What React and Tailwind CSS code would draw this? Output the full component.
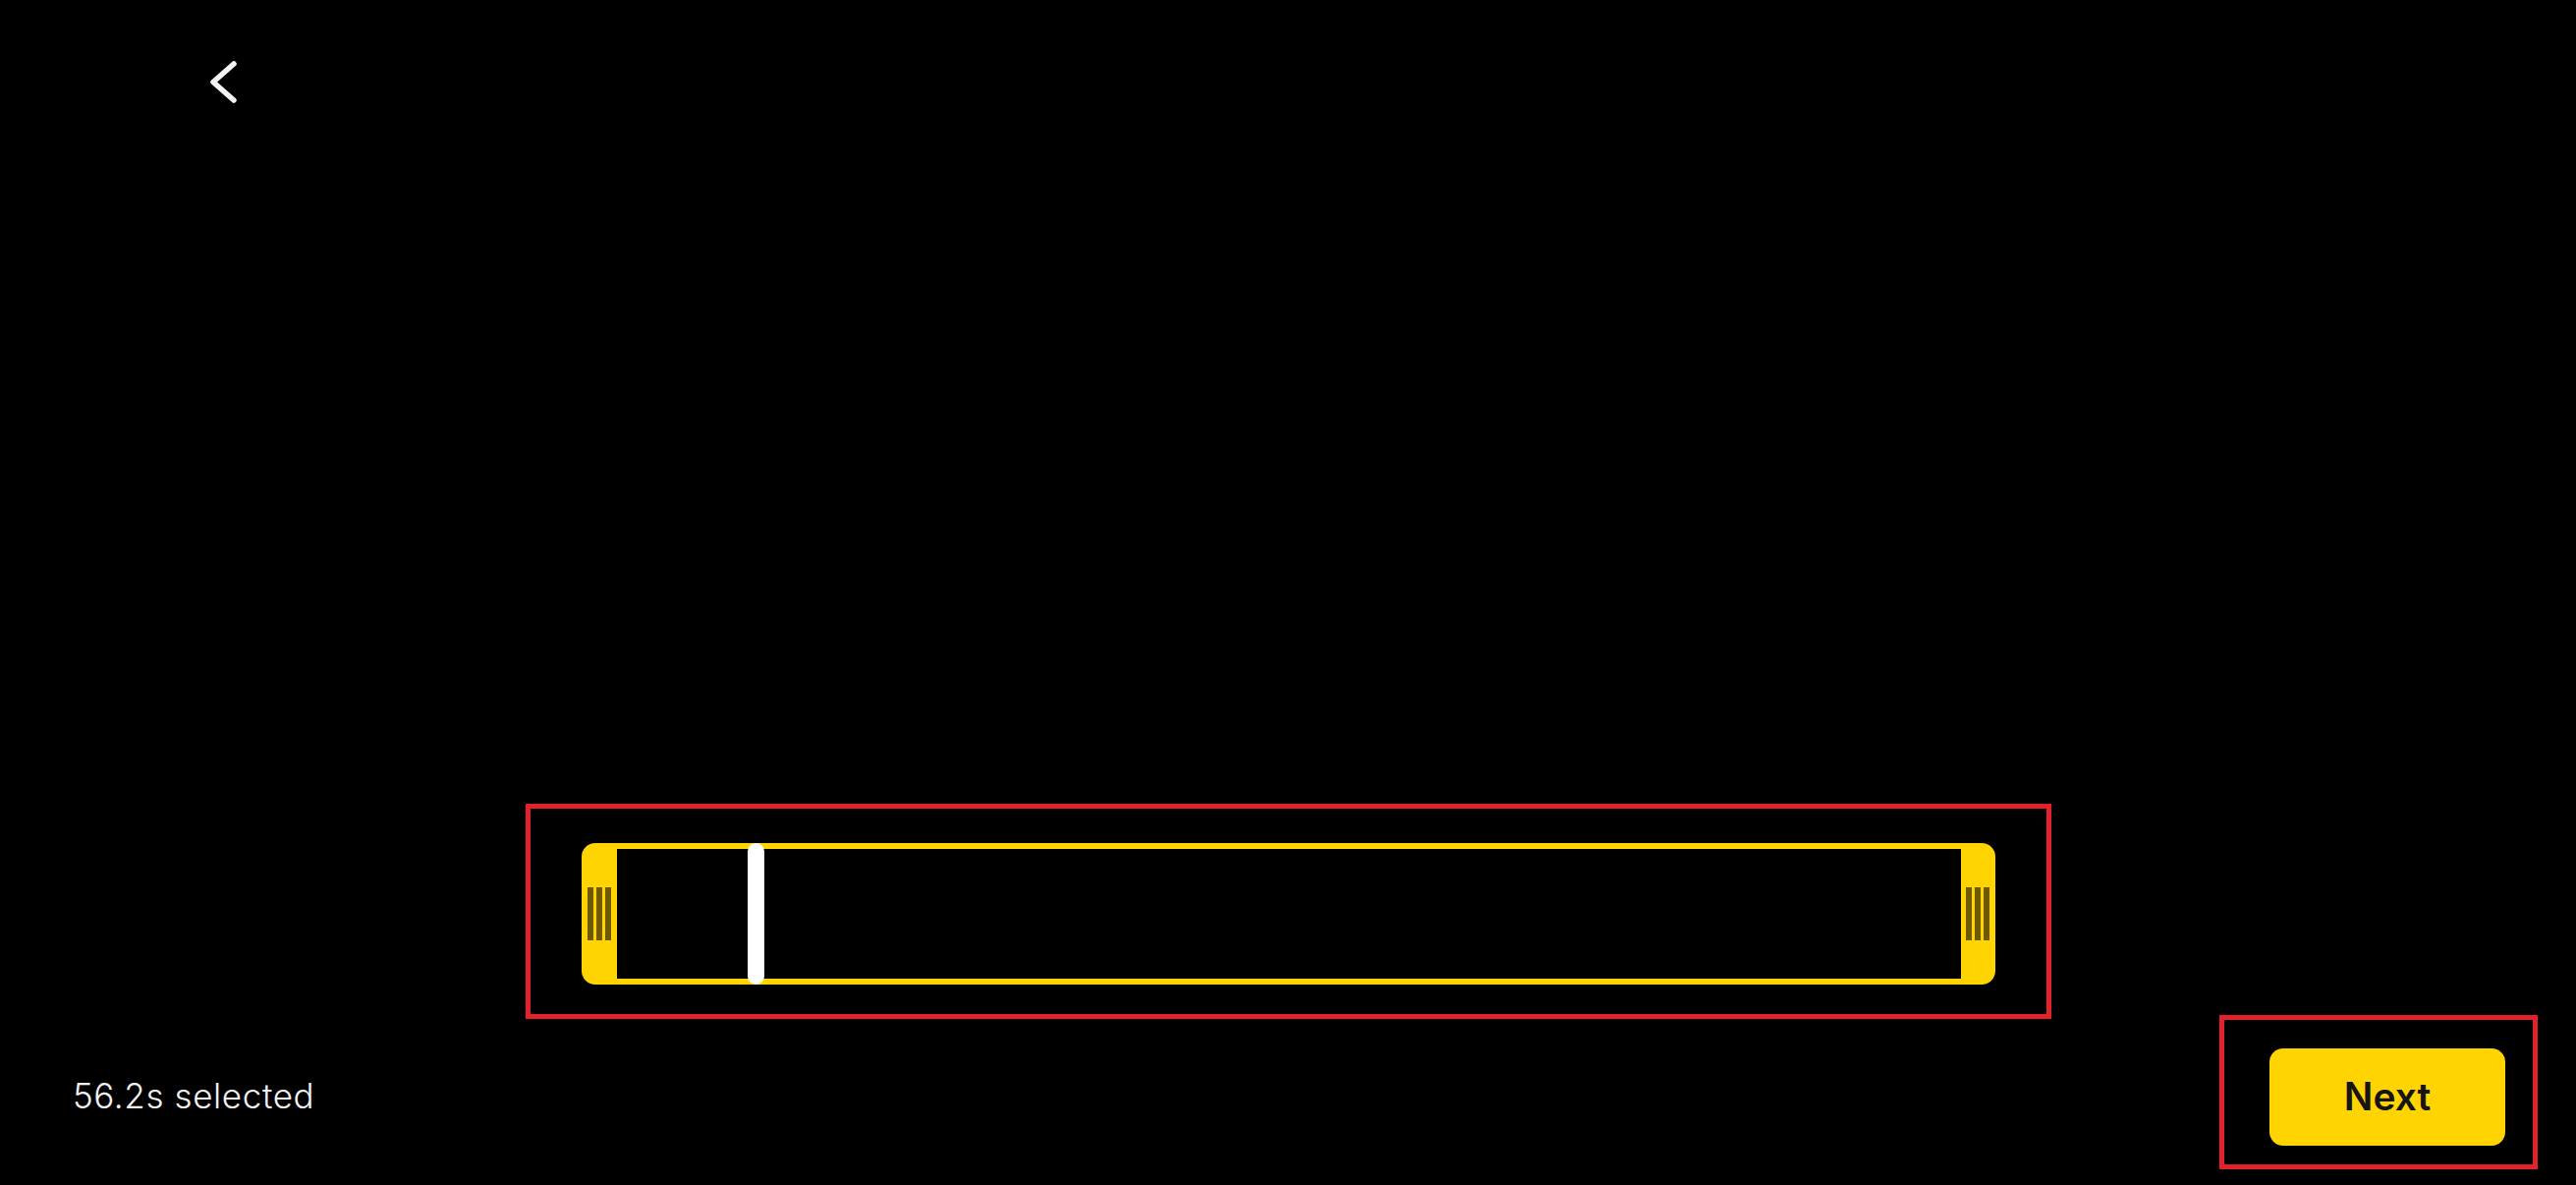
import React from 'react';

const YELLOW = 'bg-[#ffd400]';

function Grip() {
    return (
        <div className="flex gap-[3px]">
            <span className="block w-[6px] h-[54px] bg-[#6e5800]" />
            <span className="block w-[6px] h-[54px] bg-[#6e5800]" />
            <span className="block w-[6px] h-[54px] bg-[#6e5800]" />
        </div>
    );
}

export default function App() {
    const playheadLeft = 169;

    return (
        <div className="w-full h-[1206px] bg-black flex flex-col overflow-hidden" style={{ fontFamily: 'Inter, "Noto Sans", sans-serif' }}>
            {/* Back */}
            <div className="pt-[58px] pl-[210px]">
                <svg width="36" height="52" viewBox="0 0 36 52" fill="none">
                    <polyline points="28,7 7,25.5 28,44" stroke="#f4f4f4" strokeWidth="5.5" strokeLinecap="round" strokeLinejoin="round" />
                </svg>
            </div>

            <div className="flex-1" />

            {/* Trim range */}
            <div className="mx-auto w-[1553px] h-[219px] border-[5px] border-[#e3212b] pt-[35px] flex justify-center">
                <div className="relative w-[1439px] h-[144px] flex">
                    <div className={`w-[36px] h-full ${YELLOW} rounded-l-[14px] flex items-center justify-center`}>
                        <Grip />
                    </div>
                    <div className="flex-1 h-full border-y-[6px] border-[#ffd400]" />
                    <div className={`w-[35px] h-full ${YELLOW} rounded-r-[14px] flex items-center justify-center`}>
                        <Grip />
                    </div>
                    <div className="absolute top-0 h-full w-[17px] rounded-full bg-white" style={{ left: playheadLeft }} />
                </div>
            </div>

            {/* Footer */}
            <div className="-mt-[4px] pb-[16px] flex items-center justify-between">
                <p className="pl-[74px] pt-[8px] text-[35px] font-light text-[#f2f2f2] tracking-[0.6px]">56.2s selected</p>
                <div className="mr-[39px] w-[324px] h-[157px] border-[5px] border-[#e3212b] pl-[46px] pt-[29px]">
                    <button className={`w-[240px] h-[99px] rounded-[14px] ${YELLOW} text-[39px] font-semibold text-[#151515]`}>
                        Next
                    </button>
                </div>
            </div>
        </div>
    );
}
